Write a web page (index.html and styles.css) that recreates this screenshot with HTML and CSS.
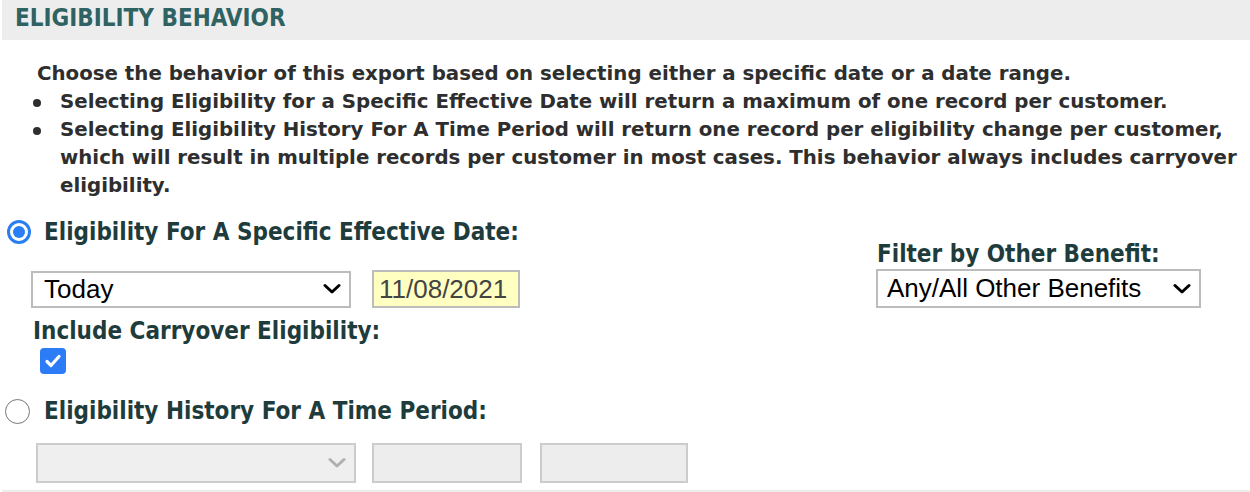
FILE: index.html
```html
<!DOCTYPE html>
<html lang="en">
<head>
<meta charset="utf-8">
<title>Eligibility Behavior</title>
<link rel="stylesheet" href="styles.css">
</head>
<body>
<div class="page">
  <div class="section-head">ELIGIBILITY BEHAVIOR</div>

  <div class="desc">
    <p class="intro">Choose the behavior of this export based on selecting either a specific date or a date range.</p>
    <ul class="notes">
      <li>Selecting Eligibility for a Specific Effective Date will return a maximum of one record per customer.</li>
      <li>Selecting Eligibility History For A Time Period will return one record per eligibility change per customer, which will result in multiple records per customer in most cases. This behavior always includes carryover eligibility.</li>
    </ul>
  </div>

  <div class="options">
    <div class="left-col">
      <div class="radio-row">
        <span class="radio checked"><span class="dot"></span></span>
        <span class="opt-label">Eligibility For A Specific Effective Date:</span>
      </div>
      <div class="field-row">
        <div class="select today-select">
          <span class="select-text">Today</span>
          <svg class="chev" width="18" height="12" viewBox="0 0 18 12"><path d="M2 2.5 L9 9 L16 2.5" fill="none" stroke="#000" stroke-width="3" stroke-linecap="round" stroke-linejoin="round"/></svg>
        </div>
        <div class="date-input">11/08/2021</div>
      </div>
      <div class="carry-label">Include Carryover Eligibility:</div>
      <div class="check-row">
        <span class="checkbox">
          <svg width="26" height="26" viewBox="0 0 26 26"><path d="M7 13.5 L11 17.5 L19 8.5" fill="none" stroke="#fff" stroke-width="3.2" stroke-linecap="round" stroke-linejoin="round"/></svg>
        </span>
      </div>
      <div class="radio-row second">
        <span class="radio"></span>
        <span class="opt-label">Eligibility History For A Time Period:</span>
      </div>
      <div class="field-row disabled-row">
        <div class="select disabled-select">
          <span class="select-text"></span>
          <svg class="chev" width="18" height="12" viewBox="0 0 18 12"><path d="M2 2.5 L9 9 L16 2.5" fill="none" stroke="#b0b0b0" stroke-width="3" stroke-linecap="round" stroke-linejoin="round"/></svg>
        </div>
        <div class="disabled-input first"></div>
        <div class="disabled-input last"></div>
      </div>
    </div>
    <div class="right-col">
      <div class="filter-label">Filter by Other Benefit:</div>
      <div class="select filter-select">
        <span class="select-text">Any/All Other Benefits</span>
        <svg class="chev" width="18" height="12" viewBox="0 0 18 12"><path d="M2 2.5 L9 9 L16 2.5" fill="none" stroke="#000" stroke-width="3" stroke-linecap="round" stroke-linejoin="round"/></svg>
      </div>
    </div>
  </div>

  <div class="next-head"></div>
</div>
</body>
</html>
```

FILE: styles.css
```css
* { box-sizing: border-box; }

html, body {
  margin: 0;
  padding: 0;
  background: #ffffff;
}

body {
  font-family: "DejaVu Sans Condensed", "DejaVu Sans", sans-serif;
  font-weight: bold;
  color: #333333;
  overflow: hidden;
}

.page {
  margin-left: 2px;
  width: 1248px;
}

.section-head {
  height: 40px;
  background: #ededed;
  color: #2f6262;
  font-size: 24px;
  line-height: 36px;
  padding-left: 13px;
}

.desc {
  margin-top: 20px;
  font-family: "DejaVu Sans", sans-serif;
  font-size: 19.8px;
  line-height: 28px;
  color: #2e2e2e;
}

.intro {
  margin: 0;
  padding-left: 35px;
}

.notes {
  margin: 0;
  padding: 0;
  list-style: none;
}

.notes li {
  display: flex;
  align-items: flex-start;
}

.notes li::before {
  content: "";
  flex: none;
  width: 8px;
  height: 8px;
  border-radius: 50%;
  background: #2e2e2e;
  margin: 11px 19px 0 31px;
}

.options {
  margin-top: 16px;
  display: flex;
}

.left-col {
  width: 874px;
  flex: none;
}

.right-col {
  flex: 1;
  padding-top: 23px;
}

.radio-row {
  height: 32px;
  display: flex;
  align-items: center;
  gap: 14px;
  padding-left: 4px;
}

.radio {
  width: 24px;
  height: 24px;
  flex: none;
  border-radius: 50%;
  border: 1.5px solid #777777;
  background: #ffffff;
  display: flex;
  align-items: center;
  justify-content: center;
}

.radio.checked {
  border: 3px solid #2a7ef5;
  margin-left: 1px;
  width: 24px;
  height: 24px;
  margin-right: -1px;
}

.radio .dot {
  width: 12px;
  height: 12px;
  border-radius: 50%;
  background: #2a7ef5;
}

.opt-label,
.carry-label,
.filter-label {
  font-size: 24px;
  color: #1f3c3c;
}

.opt-label {
  line-height: 32px;
}

.field-row {
  margin-top: 22px;
  display: flex;
  align-items: center;
  padding-left: 29px;
}

.select {
  display: flex;
  align-items: center;
  justify-content: space-between;
  border: 2px solid #bcbcbc;
  background: #ffffff;
  font-family: "Liberation Sans", Arial, sans-serif;
  font-weight: normal;
  font-size: 26px;
  color: #000000;
}

.today-select {
  width: 320px;
  height: 37px;
  padding: 0 8px 0 11px;
}

.date-input {
  margin-left: 21px;
  width: 148px;
  height: 38px;
  border: 2px solid #bcbcbc;
  background: #ffffc2;
  font-family: "Liberation Sans", Arial, sans-serif;
  font-weight: normal;
  font-size: 26px;
  color: #444444;
  line-height: 34px;
  padding-left: 5px;
}

.carry-label {
  margin-top: 9px;
  line-height: 28px;
  padding-left: 31px;
}

.check-row {
  margin-top: 3px;
  padding-left: 38px;
  height: 26px;
}

.checkbox {
  display: block;
  width: 26px;
  height: 26px;
  border-radius: 4px;
  background: #2b7cf6;
}

.checkbox svg {
  display: block;
}

.radio-row.second {
  margin-top: 21px;
  padding-left: 3px;
  gap: 14px;
}

.radio-row.second .radio {
  width: 25px;
  height: 25px;
}

.disabled-row {
  margin-top: 16px;
  padding-left: 34px;
}

.disabled-select {
  width: 320px;
  height: 40px;
  border-color: #cccccc;
  background: #efefef;
  padding: 0 8px 0 11px;
}

.disabled-input {
  height: 40px;
  border: 2px solid #cccccc;
  background: #ededed;
}

.disabled-input.first {
  margin-left: 16px;
  width: 150px;
}

.disabled-input.last {
  margin-left: 18px;
  width: 148px;
}

.filter-label {
  line-height: 30px;
  padding-left: 1px;
}

.filter-select {
  width: 325px;
  height: 39px;
  padding: 0 8px 0 9px;
}

.chev {
  display: block;
  flex: none;
}

.next-head {
  margin-top: 7px;
  height: 10px;
  background: #ededed;
}
```
